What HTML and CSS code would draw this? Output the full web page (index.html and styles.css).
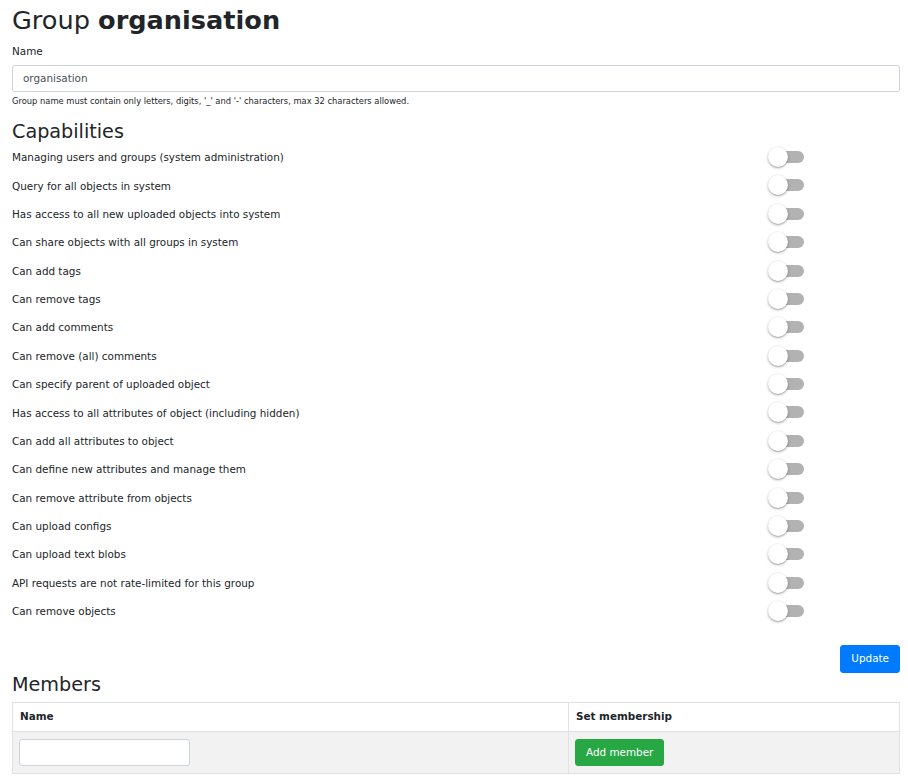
FILE: index.html
```html
<!DOCTYPE html>
<html lang="en">
<head>
<meta charset="utf-8">
<title>Group organisation</title>
<link rel="stylesheet" href="styles.css">
</head>
<body>
<div class="page">
  <h1 class="title">Group <b>organisation</b></h1>
  <div class="field">
    <label class="label">Name</label>
    <input class="input" type="text" value="organisation">
    <div class="help">Group name must contain only letters, digits, '_' and '-' characters, max 32 characters allowed.</div>
  </div>
  <h2 class="section">Capabilities</h2>
  <div class="caps">
    <div class="cap"><span>Managing users and groups (system administration)</span><span class="switch"><span class="track"></span><span class="knob"></span></span></div>
    <div class="cap"><span>Query for all objects in system</span><span class="switch"><span class="track"></span><span class="knob"></span></span></div>
    <div class="cap"><span>Has access to all new uploaded objects into system</span><span class="switch"><span class="track"></span><span class="knob"></span></span></div>
    <div class="cap"><span>Can share objects with all groups in system</span><span class="switch"><span class="track"></span><span class="knob"></span></span></div>
    <div class="cap"><span>Can add tags</span><span class="switch"><span class="track"></span><span class="knob"></span></span></div>
    <div class="cap"><span>Can remove tags</span><span class="switch"><span class="track"></span><span class="knob"></span></span></div>
    <div class="cap"><span>Can add comments</span><span class="switch"><span class="track"></span><span class="knob"></span></span></div>
    <div class="cap"><span>Can remove (all) comments</span><span class="switch"><span class="track"></span><span class="knob"></span></span></div>
    <div class="cap"><span>Can specify parent of uploaded object</span><span class="switch"><span class="track"></span><span class="knob"></span></span></div>
    <div class="cap"><span>Has access to all attributes of object (including hidden)</span><span class="switch"><span class="track"></span><span class="knob"></span></span></div>
    <div class="cap"><span>Can add all attributes to object</span><span class="switch"><span class="track"></span><span class="knob"></span></span></div>
    <div class="cap"><span>Can define new attributes and manage them</span><span class="switch"><span class="track"></span><span class="knob"></span></span></div>
    <div class="cap"><span>Can remove attribute from objects</span><span class="switch"><span class="track"></span><span class="knob"></span></span></div>
    <div class="cap"><span>Can upload configs</span><span class="switch"><span class="track"></span><span class="knob"></span></span></div>
    <div class="cap"><span>Can upload text blobs</span><span class="switch"><span class="track"></span><span class="knob"></span></span></div>
    <div class="cap"><span>API requests are not rate-limited for this group</span><span class="switch"><span class="track"></span><span class="knob"></span></span></div>
    <div class="cap"><span>Can remove objects</span><span class="switch"><span class="track"></span><span class="knob"></span></span></div>
  </div>
  <div class="actions"><button class="btn btn-primary">Update</button></div>
  <h2 class="section members">Members</h2>
  <table class="table">
    <thead>
      <tr><th class="col-name">Name</th><th>Set membership</th></tr>
    </thead>
    <tbody>
      <tr><td><input class="input small" type="text"></td><td><button class="btn btn-success">Add member</button></td></tr>
    </tbody>
  </table>
</div>
</body>
</html>
```

FILE: styles.css
```css
* { box-sizing: border-box; }
html, body { margin: 0; padding: 0; background: #fff; }
body {
  font-family: "DejaVu Sans", "Liberation Sans", sans-serif;
  font-size: 10.4px;
  color: #212529;
  line-height: 1.5;
}
.page { padding: 0 8px 0 12px; }
.title {
  font-size: 25.6px;
  font-weight: 400;
  line-height: 1.2;
  margin: 5px 0 8px;
}
.title b { font-weight: 700; }
.field { margin-bottom: 12px; }
.label { display: block; margin-bottom: 5.5px; }
.input {
  display: block;
  width: 100%;
  height: 27px;
  padding: 0 10px;
  font: inherit;
  color: #495057;
  border: 1px solid #ced4da;
  border-radius: 3px;
  background: #fff;
}
.help { font-size: 8.33px; margin-top: 3.5px; line-height: 1.5; }
.section {
  font-size: 19.2px;
  font-weight: 400;
  line-height: 1.2;
  margin: 0;
}
.caps { margin-top: 1px; }
.cap {
  display: grid;
  grid-template-columns: 756px 36px;
  align-items: center;
  height: 28.375px;
}
.switch { position: relative; display: block; width: 36px; height: 20px; margin-top: -2px; }
.track {
  position: absolute;
  left: 10px; top: 4px;
  width: 26px; height: 12px;
  border-radius: 6px;
  background: #b2b2b2;
}
.knob {
  position: absolute;
  left: 0; top: 0;
  width: 20px; height: 20px;
  border-radius: 50%;
  background: #fff;
  box-shadow: 0 1px 3px rgba(0,0,0,0.3), 0 1px 1px rgba(0,0,0,0.14);
}
.actions { display: flex; justify-content: flex-end; margin-top: 19px; }
.btn {
  font: inherit;
  border: 1px solid transparent;
  border-radius: 3px;
  color: #fff;
  height: 28px;
  padding: 0 10px;
  cursor: pointer;
}
.btn-primary { background: #007bff; border-color: #007bff; }
.btn-success { background: #28a745; border-color: #28a745; height: 27px; }
.members { margin: 0 0 6px; }
.table {
  width: 100%;
  border-collapse: collapse;
}
.table th, .table td {
  border: 1px solid #dee2e6;
  padding: 6px 6px;
  text-align: left;
  vertical-align: middle;
}
.table th { font-weight: 700; height: 29px; padding: 0 7px; }
.table td { height: 42px; }
.col-name { width: 556px; }
.table tbody tr { background: #f2f2f2; }
.input.small { width: 171px; }
```
